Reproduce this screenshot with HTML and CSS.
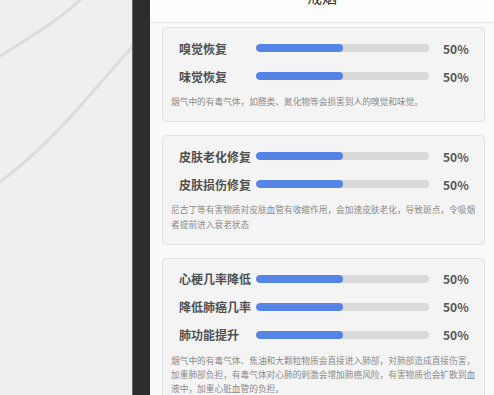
FILE: index.html
```html
<!DOCTYPE html>
<html>
<head>
    <title>戒烟</title>
    <link rel="stylesheet" href="styles.css">
</head>
<body>

<div class="backdrop">
    <svg class="backdrop-lines" width="132" height="395" viewBox="0 0 132 395">
        <path d="M-4 59 C 25 40, 60 20, 82 -2" />
        <path d="M-4 185 C 30 160, 60 130, 90 95 C 105 78, 120 60, 135 44" />
    </svg>
</div>

<div class="divider"></div>

<div class="panel">
    <div class="panel-header">
        <h2 class="panel-title">戒烟</h2>
    </div>

    <div class="card">
        <div class="stat-row">
            <span class="stat-label">嗅觉恢复</span>
            <div class="stat-bar"><div class="stat-fill" style="width: 50%"></div></div>
            <span class="stat-value">50%</span>
        </div>
        <div class="stat-row">
            <span class="stat-label">味觉恢复</span>
            <div class="stat-bar"><div class="stat-fill" style="width: 50%"></div></div>
            <span class="stat-value">50%</span>
        </div>
        <p class="card-note">烟气中的有毒气体，如醛类、氮化物等会损害到人的嗅觉和味觉。</p>
    </div>

    <div class="card">
        <div class="stat-row">
            <span class="stat-label">皮肤老化修复</span>
            <div class="stat-bar"><div class="stat-fill" style="width: 50%"></div></div>
            <span class="stat-value">50%</span>
        </div>
        <div class="stat-row">
            <span class="stat-label">皮肤损伤修复</span>
            <div class="stat-bar"><div class="stat-fill" style="width: 50%"></div></div>
            <span class="stat-value">50%</span>
        </div>
        <p class="card-note">尼古丁等有害物质对皮肤血管有收缩作用，会加速皮肤老化，导致斑点，令吸烟者提前进入衰老状态</p>
    </div>

    <div class="card">
        <div class="stat-row">
            <span class="stat-label">心梗几率降低</span>
            <div class="stat-bar"><div class="stat-fill" style="width: 50%"></div></div>
            <span class="stat-value">50%</span>
        </div>
        <div class="stat-row">
            <span class="stat-label">降低肺癌几率</span>
            <div class="stat-bar"><div class="stat-fill" style="width: 50%"></div></div>
            <span class="stat-value">50%</span>
        </div>
        <div class="stat-row">
            <span class="stat-label">肺功能提升</span>
            <div class="stat-bar"><div class="stat-fill" style="width: 50%"></div></div>
            <span class="stat-value">50%</span>
        </div>
        <p class="card-note">烟气中的有毒气体、焦油和大颗粒物质会直接进入肺部，对肺部造成直接伤害，加重肺部负担，有毒气体对心肺的刺激会增加肺癌风险，有害物质也会扩散到血液中，加重心脏血管的负担。</p>
    </div>
</div>

</body>
</html>
```

FILE: styles.css
```css
body {
    margin: 0;
    height: 395px;
    overflow: hidden;
    display: flex;
    font-family: "Noto Sans CJK SC", "Noto Sans", sans-serif;
    background: #efefef;
}
.backdrop {
    width: 132px;
    flex-shrink: 0;
    background: #efefef;
}
.backdrop-lines path {
    fill: none;
    stroke: #dcdcdc;
    stroke-width: 3;
}
.divider {
    width: 17px;
    flex-shrink: 0;
    background: #2d2d2d;
    border-left: 1px solid #6a6a6a;
}
.panel {
    flex: 1;
    background: #fafafa;
    padding: 0 9px 0 12px;
    overflow: hidden;
}
.panel-header {
    height: 22px;
    margin: 0 -9px 4px -12px;
    background: #fdfdfd;
    border-bottom: 1px solid #e4e4e4;
    overflow: hidden;
}
.panel-title {
    margin: -12px 0 0 0;
    text-align: center;
    font-size: 15px;
    font-weight: 400;
    line-height: 18px;
    color: #333;
}
.card {
    background: #f4f4f4;
    border: 1px solid #e2e2e2;
    border-radius: 4px;
    padding: 6px 8px 12px 8px;
    margin-bottom: 13px;
}
.stat-row {
    display: flex;
    align-items: center;
    height: 28px;
    padding-left: 8px;
}
.stat-label {
    width: 77px;
    flex-shrink: 0;
    font-size: 12px;
    font-weight: 700;
    color: #505050;
}
.stat-bar {
    width: 173px;
    height: 8px;
    flex-shrink: 0;
    background: #d9d9d9;
    border-radius: 4px;
    overflow: hidden;
}
.stat-fill {
    height: 100%;
    background: #5583e6;
    border-radius: 4px;
}
.stat-value {
    margin-left: 14px;
    font-size: 12px;
    font-weight: 600;
    color: #555;
}
.card-note {
    margin: 5px 0 0 0;
    font-size: 8.7px;
    line-height: 14.3px;
    color: #8a8a8a;
}
```
